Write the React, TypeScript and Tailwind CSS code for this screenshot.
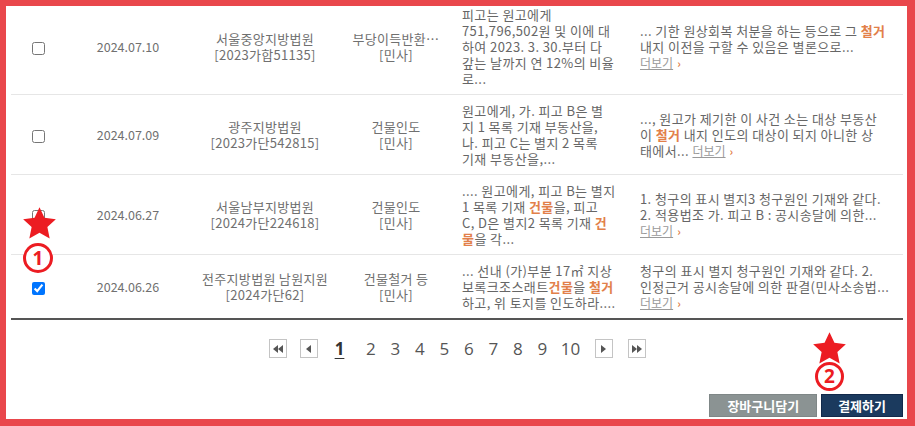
import React from "react"

type Row = {
  checked: boolean
  date: string
  court: string
  caseNo: string
  type: string
  summary: string[]
  detail: string[]
  morePrefix?: string
}

const rows: Row[] = [
  {
    checked: false,
    date: "2024.07.10",
    court: "서울중앙지방법원",
    caseNo: "[2023가합51135]",
    type: "부당이득반환…",
    summary: [
      "피고는 원고에게",
      "751,796,502원 및 이에 대",
      "하여 2023. 3. 30.부터 다",
      "갚는 날까지 연 12%의 비율",
      "로...",
    ],
    detail: ["... 기한 원상회복 처분을 하는 등으로 그 *철거*", "내지 이전을 구할 수 있음은 별론으로..."],
  },
  {
    checked: false,
    date: "2024.07.09",
    court: "광주지방법원",
    caseNo: "[2023가단542815]",
    type: "건물인도",
    summary: ["원고에게, 가. 피고 B은 별", "지 1 목록 기재 부동산을,", "나. 피고 C는 별지 2 목록", "기재 부동산을,..."],
    detail: ["..., 원고가 제기한 이 사건 소는 대상 부동산", "이 *철거* 내지 인도의 대상이 되지 아니한 상"],
    morePrefix: "태에서... ",
  },
  {
    checked: false,
    date: "2024.06.27",
    court: "서울남부지방법원",
    caseNo: "[2024가단224618]",
    type: "건물인도",
    summary: [".... 원고에게, 피고 B는 별지", "1 목록 기재 *건물*을, 피고", "C, D은 별지2 목록 기재 *건*", "*물*을 각..."],
    detail: ["1. 청구의 표시 별지3 청구원인 기재와 같다.", "2. 적용법조 가. 피고 B : 공시송달에 의한..."],
  },
  {
    checked: true,
    date: "2024.06.26",
    court: "전주지방법원 남원지원",
    caseNo: "[2024가단62]",
    type: "건물철거 등",
    summary: ["... 선내 (가)부분 17㎡ 지상", "보록크조스래트*건물*을 *철거*", "하고, 위 토지를 인도하라...."],
    detail: ["청구의 표시 별지 청구원인 기재와 같다. 2.", "인정근거 공시송달에 의한 판결(민사소송법..."],
  },
]

// "*word*" marks a highlighted keyword
function Line({ text }: { text: string }) {
  const parts = text.split(/(\*[^*]+\*)/)
  return (
    <div className="whitespace-nowrap">
      {parts.map((p, i) =>
        p.startsWith("*") ? (
          <span key={i} className="font-bold text-[#e2804a]">
            {p.slice(1, -1)}
          </span>
        ) : (
          <span key={i}>{p}</span>
        )
      )}
    </div>
  )
}

function More({ prefix }: { prefix?: string }) {
  return (
    <div className="whitespace-nowrap">
      {prefix}
      <span className="text-[12px] tracking-normal text-[#9a9a9a] underline">더보기</span>
      <span className="ml-[4px] text-[11px] font-bold text-[#e2804a]">›</span>
    </div>
  )
}

function PageBox({ dir, double }: { dir: "left" | "right"; double?: boolean }) {
  const tri = dir === "left" ? "M5 0 L5 8 L0 4 Z" : "M0 0 L0 8 L5 4 Z"
  return (
    <span className="flex h-[19px] w-[18px] items-center justify-center border border-[#c4c4c4] bg-white">
      <svg width={double ? 10 : 5} height="8" viewBox={double ? "0 0 10 8" : "0 0 5 8"} fill="#555">
        <path d={tri} />
        {double && <path d={tri} transform="translate(5 0)" />}
      </svg>
    </span>
  )
}

function Star({ className }: { className: string }) {
  return (
    <svg viewBox="0 0 24 24" className={className} fill="#ec1c22">
      <polygon points="12 1.5 15.2 8.3 22.6 9.2 17.1 14.3 18.6 21.7 12 18 5.4 21.7 6.9 14.3 1.4 9.2 8.8 8.3" />
    </svg>
  )
}

function Badge({ n, className }: { n: string; className: string }) {
  return (
    <div
      className={`absolute flex items-center justify-center rounded-full border-[3px] border-[#ec1c22] bg-white font-['Open_Sans',sans-serif] text-[19px] leading-none font-bold text-[#ec1c22] ${className}`}
    >
      {n}
    </div>
  )
}

export default function App() {
  return (
    <div className="relative h-[426px] w-[915px] overflow-hidden bg-white font-['Noto_Sans_CJK_KR',sans-serif] text-[12.5px] leading-[16px] text-[#707070]">
      <div className="pr-[12px] pl-[11px]">
        <table className="-mt-px w-full table-fixed border-collapse">
          <colgroup>
            <col className="w-[55px]" />
            <col className="w-[124px]" />
            <col className="w-[150px]" />
            <col className="w-[112px]" />
            <col className="w-[176px]" />
            <col />
          </colgroup>
          <tbody>
            {rows.map((r, i) => (
              <tr
                key={r.date}
                className={i === rows.length - 1 ? "border-b-2 border-[#555]" : "border-b border-[#e6e6e6]"}
              >
                <td className="text-center">
                  <input type="checkbox" defaultChecked={r.checked} className="align-middle" />
                </td>
                <td className="text-center">{r.date}</td>
                <td className="text-center text-[13px] tracking-[0.3px]">
                  <div>{r.court}</div>
                  <div>{r.caseNo}</div>
                </td>
                <td className="px-1 text-center text-[13px] tracking-[0.3px]">
                  <div className="whitespace-nowrap">{r.type}</div>
                  <div>[민사]</div>
                </td>
                <td className="py-[7.5px] pl-[10px] text-[13px] tracking-[0.4px] text-[#666]">
                  {r.summary.map((l, j) => (
                    <Line key={j} text={l} />
                  ))}
                </td>
                <td className="py-[7.5px] pl-[12px] text-[13px] tracking-[0.4px] text-[#666]">
                  {r.detail.map((l, j) => (
                    <Line key={j} text={l} />
                  ))}
                  <More prefix={r.morePrefix} />
                </td>
              </tr>
            ))}
          </tbody>
        </table>

        <div className="mt-[19px] flex items-center justify-center font-['Open_Sans',sans-serif] text-[17px] leading-[19px] text-[#555]">
          <PageBox dir="left" double />
          <span className="ml-[13px]">
            <PageBox dir="left" />
          </span>
          <span className="ml-[10px] w-[24px] text-center font-bold text-[#333] underline underline-offset-[3px]">1</span>
          <span className="ml-[7px] flex">
            {["2", "3", "4", "5", "6", "7", "8", "9"].map((n) => (
              <span key={n} className="w-[24.5px] text-center">
                {n}
              </span>
            ))}
          </span>
          <span className="ml-px w-[30px] text-center">10</span>
          <span className="ml-[9px]">
            <PageBox dir="right" />
          </span>
          <span className="ml-[15px]">
            <PageBox dir="right" double />
          </span>
        </div>

        <div className="mt-[36px] flex justify-end gap-[4px]">
          <button className="h-[23px] border border-[#7f8787] bg-[#8b9393] px-[17px] text-[13px] leading-none font-bold text-white">
            장바구니담기
          </button>
          <button className="h-[23px] border border-[#12294a] bg-[#1b3a5e] px-[16px] text-[13px] leading-none font-bold text-white">
            결제하기
          </button>
        </div>
      </div>

      {/* annotation layer */}
      <div className="pointer-events-none absolute inset-0 border-t-[6px] border-r-[8px] border-b-[7px] border-l-[6px] border-[#e9474c]" />
      <Star className="absolute top-[205px] left-[21px] h-[37px] w-[37px]" />
      <Badge n="1" className="top-[243px] left-[23px] h-[30px] w-[30px]" />
      <Star className="absolute top-[330px] left-[811px] h-[37px] w-[37px]" />
      <Badge n="2" className="top-[362px] left-[815px] h-[29px] w-[29px]" />
    </div>
  )
}
